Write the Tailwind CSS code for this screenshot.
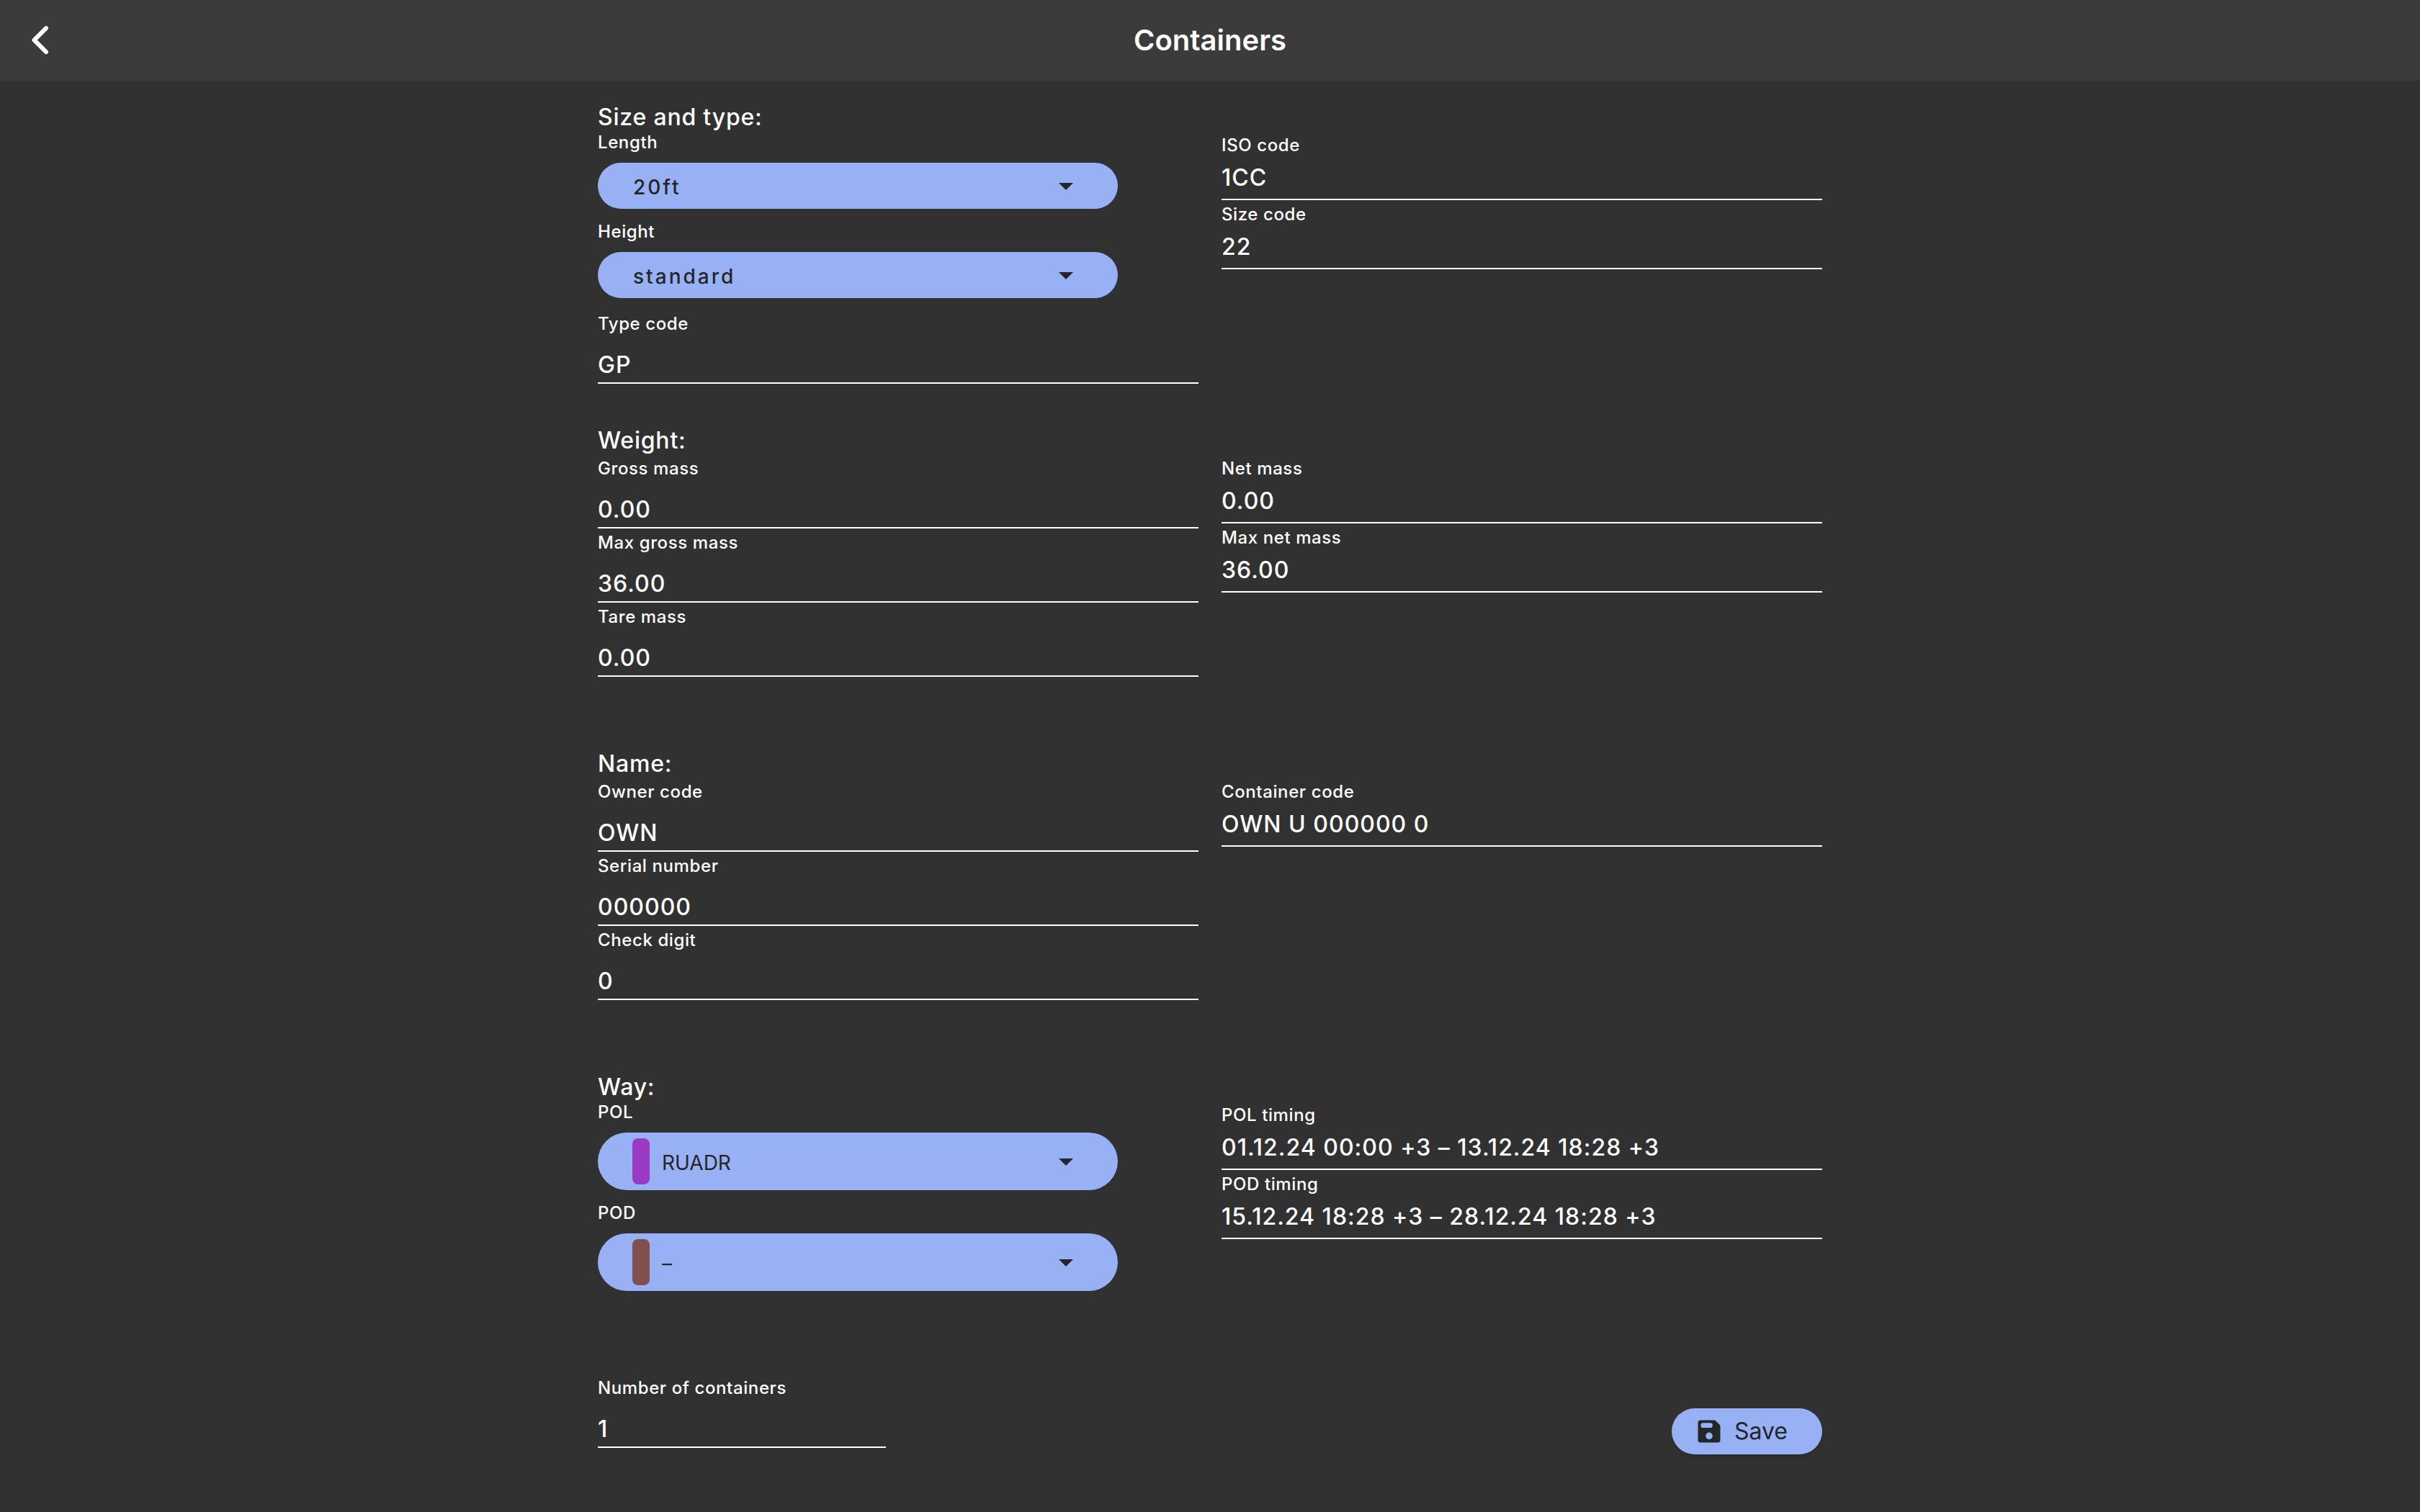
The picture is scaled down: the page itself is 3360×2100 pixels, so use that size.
<!DOCTYPE html>
<html lang="en">
<head>
<meta charset="utf-8">
<meta name="viewport" content="width=device-width, initial-scale=1">
<title>Containers</title>
<script src="https://cdn.jsdelivr.net/npm/@tailwindcss/browser@4"></script>
</head>
<body class="min-h-screen bg-[#313131] font-['Inter',sans-serif] text-white">

<header class="grid h-28 grid-cols-[1fr_auto_1fr] items-center bg-[#3b3b3b] px-11">
  <button type="button" aria-label="Back" class="justify-self-start">
    <svg class="h-10 w-6" viewBox="0 0 24 40" fill="none" stroke="currentColor" stroke-width="6" stroke-linecap="round" stroke-linejoin="round"><path d="M20 3.2 3.5 19.7 20 36.2"/></svg>
  </button>
  <h1 class="text-[40px] leading-[48px] font-semibold">Containers</h1>
</header>

<form class="mx-auto max-w-[1700px] pt-[30px]">

  <section class="min-h-[449px]">
    <h2 class="pt-[2px] text-[32px] leading-[38px] font-medium tracking-wide">Size and type:</h2>
    <div class="grid grid-cols-2 gap-8">
      <div class="flex flex-col gap-4">
        <div class="flex flex-col gap-3">
          <label for="length" class="text-2xl leading-8 font-medium tracking-wide">Length</label>
          <div class="relative w-[722px]">
            <select id="length" class="block h-16 w-full appearance-none rounded-full bg-[#97b1f4] pt-1 pl-[49px] text-[28px] font-medium tracking-[3px] text-[#242628]"><option>20ft</option></select>
            <svg class="pointer-events-none absolute inset-y-0 right-12 my-auto size-12 text-[#242628]" viewBox="0 0 24 24" fill="currentColor"><path d="m7 10 5 5 5-5z"/></svg>
          </div>
        </div>
        <div class="flex flex-col gap-3">
          <label for="height" class="text-2xl leading-8 font-medium tracking-wide">Height</label>
          <div class="relative w-[722px]">
            <select id="height" class="block h-16 w-full appearance-none rounded-full bg-[#97b1f4] pt-1 pl-[49px] text-[28px] font-medium tracking-[3px] text-[#242628]"><option>standard</option></select>
            <svg class="pointer-events-none absolute inset-y-0 right-12 my-auto size-12 text-[#242628]" viewBox="0 0 24 24" fill="currentColor"><path d="m7 10 5 5 5-5z"/></svg>
          </div>
        </div>
        <div class="flex flex-col pt-1">
          <label for="type-code" class="text-2xl leading-8 font-medium tracking-wide">Type code</label>
          <input id="type-code" value="GP" class="h-[67px] w-full border-b-2 border-white pt-5 pb-[5px] text-[32px] leading-10 font-medium tracking-[1px]">
        </div>
      </div>
      <div>
        <div class="flex flex-col pt-1">
          <label for="iso-code" class="text-2xl leading-8 font-medium tracking-wide">ISO code</label>
          <input id="iso-code" readonly value="1CC" class="h-[60px] w-full border-b-2 border-white pt-2 pb-[10px] text-[32px] leading-10 font-medium tracking-[1px]">
        </div>
        <div class="flex flex-col pt-1">
          <label for="size-code" class="text-2xl leading-8 font-medium tracking-wide">Size code</label>
          <input id="size-code" readonly value="22" class="h-[60px] w-full border-b-2 border-white pt-2 pb-[10px] text-[32px] leading-10 font-medium tracking-[1px]">
        </div>
      </div>
    </div>
  </section>

  <section class="min-h-[449px]">
    <h2 class="pt-[2px] text-[32px] leading-[38px] font-medium tracking-wide">Weight:</h2>
    <div class="grid grid-cols-2 gap-8">
      <div>
        <div class="flex flex-col pt-1">
          <label for="gross" class="text-2xl leading-8 font-medium tracking-wide">Gross mass</label>
          <input id="gross" value="0.00" class="h-[67px] w-full border-b-2 border-white pt-5 pb-[5px] text-[32px] leading-10 font-medium tracking-[1px]">
        </div>
        <div class="flex flex-col pt-1">
          <label for="max-gross" class="text-2xl leading-8 font-medium tracking-wide">Max gross mass</label>
          <input id="max-gross" value="36.00" class="h-[67px] w-full border-b-2 border-white pt-5 pb-[5px] text-[32px] leading-10 font-medium tracking-[1px]">
        </div>
        <div class="flex flex-col pt-1">
          <label for="tare" class="text-2xl leading-8 font-medium tracking-wide">Tare mass</label>
          <input id="tare" value="0.00" class="h-[67px] w-full border-b-2 border-white pt-5 pb-[5px] text-[32px] leading-10 font-medium tracking-[1px]">
        </div>
      </div>
      <div>
        <div class="flex flex-col pt-1">
          <label for="net" class="text-2xl leading-8 font-medium tracking-wide">Net mass</label>
          <input id="net" readonly value="0.00" class="h-[60px] w-full border-b-2 border-white pt-2 pb-[10px] text-[32px] leading-10 font-medium tracking-[1px]">
        </div>
        <div class="flex flex-col pt-1">
          <label for="max-net" class="text-2xl leading-8 font-medium tracking-wide">Max net mass</label>
          <input id="max-net" readonly value="36.00" class="h-[60px] w-full border-b-2 border-white pt-2 pb-[10px] text-[32px] leading-10 font-medium tracking-[1px]">
        </div>
      </div>
    </div>
  </section>

  <section class="min-h-[449px]">
    <h2 class="pt-[2px] text-[32px] leading-[38px] font-medium tracking-wide">Name:</h2>
    <div class="grid grid-cols-2 gap-8">
      <div>
        <div class="flex flex-col pt-1">
          <label for="owner" class="text-2xl leading-8 font-medium tracking-wide">Owner code</label>
          <input id="owner" value="OWN" class="h-[67px] w-full border-b-2 border-white pt-5 pb-[5px] text-[32px] leading-10 font-medium tracking-[1px]">
        </div>
        <div class="flex flex-col pt-1">
          <label for="serial" class="text-2xl leading-8 font-medium tracking-wide">Serial number</label>
          <input id="serial" value="000000" class="h-[67px] w-full border-b-2 border-white pt-5 pb-[5px] text-[32px] leading-10 font-medium tracking-[1px]">
        </div>
        <div class="flex flex-col pt-1">
          <label for="check" class="text-2xl leading-8 font-medium tracking-wide">Check digit</label>
          <input id="check" value="0" class="h-[67px] w-full border-b-2 border-white pt-5 pb-[5px] text-[32px] leading-10 font-medium tracking-[1px]">
        </div>
      </div>
      <div>
        <div class="flex flex-col pt-1">
          <label for="container-code" class="text-2xl leading-8 font-medium tracking-wide">Container code</label>
          <input id="container-code" readonly value="OWN U 000000 0" class="h-[60px] w-full border-b-2 border-white pt-2 pb-[10px] text-[32px] leading-10 font-medium tracking-[1px]">
        </div>
      </div>
    </div>
  </section>

  <section class="pb-[115px]">
    <h2 class="pt-[2px] text-[32px] leading-[38px] font-medium tracking-wide">Way:</h2>
    <div class="grid grid-cols-2 gap-8">
      <div class="flex flex-col gap-4">
        <div class="flex flex-col gap-3">
          <label for="pol" class="text-2xl leading-8 font-medium tracking-wide">POL</label>
          <div class="relative w-[722px]">
            <select id="pol" class="block h-20 w-full appearance-none rounded-full bg-[#97b1f4] pt-1 pl-[89px] text-[28px] text-[#242628]"><option>RUADR</option></select>
            <span class="pointer-events-none absolute inset-y-2 left-12 w-6 rounded-lg bg-[#9a3bc5]"></span>
            <svg class="pointer-events-none absolute inset-y-0 right-12 my-auto size-12 text-[#242628]" viewBox="0 0 24 24" fill="currentColor"><path d="m7 10 5 5 5-5z"/></svg>
          </div>
        </div>
        <div class="flex flex-col gap-3">
          <label for="pod" class="text-2xl leading-8 font-medium tracking-wide">POD</label>
          <div class="relative w-[722px]">
            <select id="pod" class="block h-20 w-full appearance-none rounded-full bg-[#97b1f4] pt-1 pl-[89px] text-[28px] text-[#242628]"><option>–</option></select>
            <span class="pointer-events-none absolute inset-y-2 left-12 w-6 rounded-lg bg-[#81504e]"></span>
            <svg class="pointer-events-none absolute inset-y-0 right-12 my-auto size-12 text-[#242628]" viewBox="0 0 24 24" fill="currentColor"><path d="m7 10 5 5 5-5z"/></svg>
          </div>
        </div>
      </div>
      <div>
        <div class="flex flex-col pt-1">
          <label for="pol-timing" class="text-2xl leading-8 font-medium tracking-wide">POL timing</label>
          <input id="pol-timing" readonly value="01.12.24 00:00 +3 – 13.12.24 18:28 +3" class="h-[60px] w-full border-b-2 border-white pt-2 pb-[10px] text-[32px] leading-10 font-medium tracking-[1px]">
        </div>
        <div class="flex flex-col pt-1">
          <label for="pod-timing" class="text-2xl leading-8 font-medium tracking-wide">POD timing</label>
          <input id="pod-timing" readonly value="15.12.24 18:28 +3 – 28.12.24 18:28 +3" class="h-[60px] w-full border-b-2 border-white pt-2 pb-[10px] text-[32px] leading-10 font-medium tracking-[1px]">
        </div>
      </div>
    </div>
  </section>

  <div class="flex items-start justify-between">
    <div class="flex w-[400px] flex-col pt-1">
      <label for="count" class="text-2xl leading-8 font-medium tracking-wide">Number of containers</label>
      <input id="count" inputmode="numeric" value="1" class="h-[67px] w-full border-b-2 border-white pt-5 pb-[5px] text-[32px] leading-10 font-medium tracking-[1px]">
    </div>
    <button type="submit" class="mt-12 flex h-16 items-center gap-[19px] rounded-full bg-[#97b1f4] pr-12 pl-9 text-[32px] leading-10 text-[#242628] shadow-md">
      <svg class="size-8" viewBox="0 0 32 32" fill="currentColor" fill-rule="evenodd"><path d="M4 .5H22.700a3.500 3.500 0 0 1 2.500 1L30.500 6.800a3.500 3.500 0 0 1 1 2.500V28a3.500 3.500 0 0 1-3.500 3.500H4A3.500 3.500 0 0 1 .5 28V4A3.500 3.500 0 0 1 4 .5ZM7.800 4.300a3.300 3.300 0 0 0 0 6.700H17.500a3.300 3.300 0 0 0 0-6.700ZM16 17.500a4.800 4.800 0 1 0 0 9.600 4.800 4.800 0 0 0 0-9.600Z"/></svg>
      Save
    </button>
  </div>
</form>
</body>
</html>
